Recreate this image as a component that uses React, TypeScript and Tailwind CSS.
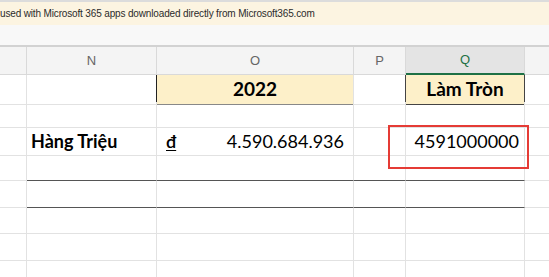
import type { ReactNode } from 'react'

const cols = 'grid grid-cols-[27px_130px_197px_52px_119px_1fr]'

function Cell({ children, className = '' }: { children?: ReactNode; className?: string }) {
  return (
    <div className={`border-r border-b border-[#e2e2e2] flex items-center ${className}`}>
      {children}
    </div>
  )
}

function EmptyRow({ h, dark }: { h: string; dark?: boolean }) {
  const d = dark ? 'border-b-[#555555]' : ''
  return (
    <div className={`${cols} ${h}`}>
      <Cell />
      <Cell className={d} />
      <Cell className={d} />
      <Cell className={d} />
      <Cell className={d} />
      <Cell className="border-r-0" />
    </div>
  )
}

export default function App() {
  return (
    <div className="relative w-[549px] h-[277px] overflow-hidden bg-white font-['Liberation_Sans',sans-serif]">
      <div className="h-[2px] bg-[#dcdcdc]" />
      <div className="h-[23px] bg-[#fcf4e1] flex items-center text-[10px] tracking-[-0.15px] text-[#2b2b2b] whitespace-nowrap">
        used with Microsoft 365 apps downloaded directly from Microsoft365.com
      </div>
      <div className="h-[20px] bg-[#f8f8f8]" />
      <div className="h-[2px] bg-[#d2d2d2]" />

      {/* column headers */}
      <div className={`${cols} h-[28px] bg-[#f4f4f4] text-[13px] text-[#666]`}>
        <div className="border-r border-b border-[#d9d9d9]" />
        <div className="border-r border-b border-[#d9d9d9] flex items-center justify-center">N</div>
        <div className="border-r border-b border-[#d9d9d9] flex items-center justify-center">O</div>
        <div className="border-r border-b border-[#d9d9d9] flex items-center justify-center">P</div>
        <div className="border-r border-[#d9d9d9] border-b-2 border-b-[#1e7145] bg-[#e4e4e4] flex items-center justify-center text-[#1e7145]">Q</div>
        <div className="border-b border-[#d9d9d9]" />
      </div>

      {/* 2022 row */}
      <div className={`${cols} h-[27px] font-['Lato',sans-serif] text-[19px] font-bold text-black`}>
        <Cell />
        <Cell />
        <Cell className="bg-[#fdf0c9] border-l border-l-[#222] border-b-[#888] justify-center -ml-px">2022</Cell>
        <Cell className="border-r-[#444]" />
        <Cell className="bg-[#fdf0c9] border-b-[#444] border-r-[#444] justify-center">Làm Tròn</Cell>
        <Cell className="border-r-0" />
      </div>

      <EmptyRow h="h-[26px]" />

      {/* data row */}
      <div className={`${cols} h-[27px] font-['Lato',sans-serif] text-[18px] text-black`}>
        <Cell />
        <Cell className="font-bold pl-[4px]">Hàng Triệu</Cell>
        <Cell className="justify-between pl-[9px] pr-[9px]">
          <span className="underline underline-offset-2 font-semibold">đ</span>
          <span>4.590.684.936</span>
        </Cell>
        <Cell />
        <Cell className="justify-end pr-[5px]">4591000000</Cell>
        <Cell className="border-r-0" />
      </div>

      <EmptyRow h="h-[26px]" dark />
      <EmptyRow h="h-[27px]" dark />
      <EmptyRow h="h-[26px]" />
      <EmptyRow h="h-[27px]" />
      <EmptyRow h="h-[27px]" />

      <div className="absolute left-[388px] top-[125px] w-[141px] h-[44px] border-2 border-[#e53b35]" />
    </div>
  )
}
